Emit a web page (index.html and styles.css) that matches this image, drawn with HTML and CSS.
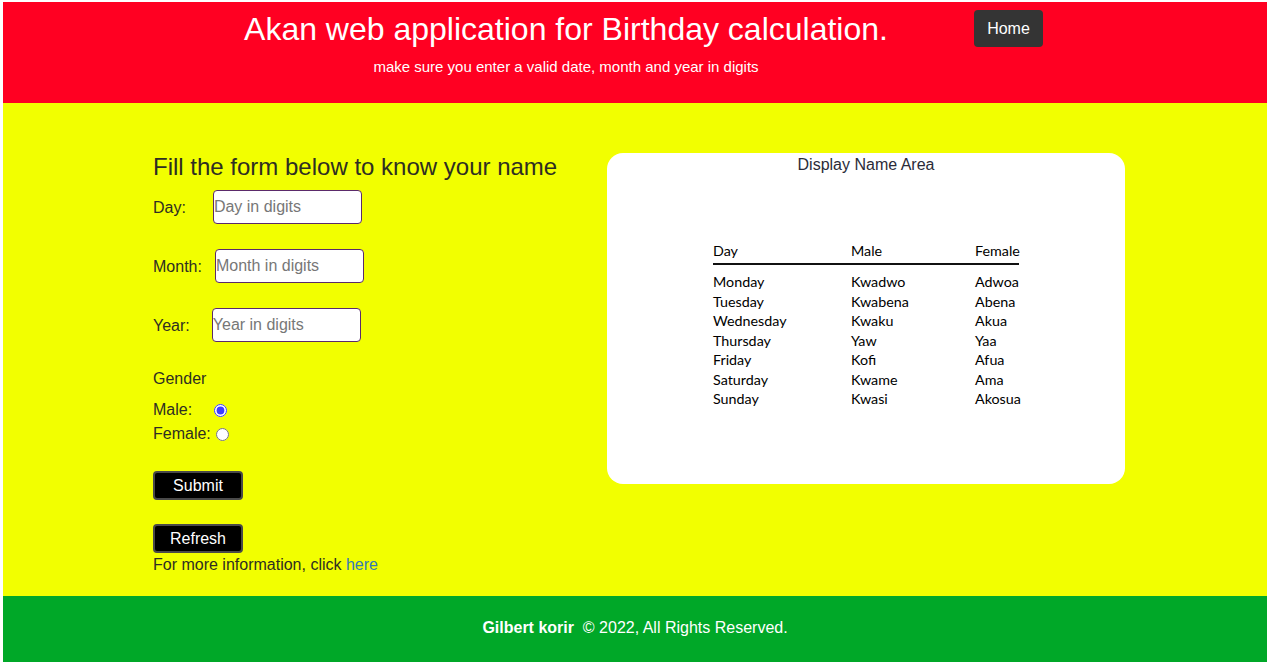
FILE: index.html
```html
<!DOCTYPE html>
<html lang="en">
<head>
<meta charset="utf-8">
<title>Akan Names</title>
<link rel="stylesheet" href="styles.css">
</head>
<body>
<div class="page">
  <header class="site-header">
    <div class="titles">
      <h1 class="title">Akan web application for Birthday calculation.</h1>
      <p class="subtitle">make sure you enter a valid date, month and year in digits</p>
    </div>
    <a class="home-btn" href="#">Home</a>
  </header>

  <main class="main">
    <section class="form-col">
      <h2 class="form-title">Fill the form below to know your name</h2>
      <form class="form">
        <div class="field">
          <label class="lbl">Day:</label>
          <input class="inp inp-day" type="text" placeholder="Day in digits">
        </div>
        <div class="field">
          <label class="lbl">Month:</label>
          <input class="inp inp-month" type="text" placeholder="Month in digits">
        </div>
        <div class="field">
          <label class="lbl">Year:</label>
          <input class="inp inp-year" type="text" placeholder="Year in digits">
        </div>
        <p class="gender">Gender</p>
        <div class="radio-row">
          <label class="lbl">Male:</label>
          <input class="radio radio-male" type="radio" name="g" checked>
        </div>
        <div class="radio-row">
          <label class="lbl">Female:</label>
          <input class="radio radio-female" type="radio" name="g">
        </div>
        <button class="btn btn-submit" type="button">Submit</button>
        <button class="btn btn-refresh" type="button">Refresh</button>
      </form>
      <p class="more">For more information, click <a class="link" href="#">here</a></p>
    </section>

    <section class="card">
      <p class="card-title">Display Name Area</p>
      <div class="names">
        <div class="names-head">
          <span>Day</span><span>Male</span><span>Female</span>
        </div>
        <div class="names-body">
          <span>Monday</span><span>Kwadwo</span><span>Adwoa</span>
          <span>Tuesday</span><span>Kwabena</span><span>Abena</span>
          <span>Wednesday</span><span>Kwaku</span><span>Akua</span>
          <span>Thursday</span><span>Yaw</span><span>Yaa</span>
          <span>Friday</span><span>Kofi</span><span>Afua</span>
          <span>Saturday</span><span>Kwame</span><span>Ama</span>
          <span>Sunday</span><span>Kwasi</span><span>Akosua</span>
        </div>
      </div>
    </section>
  </main>

  <footer class="footer">
    <strong class="author">Gilbert korir</strong>&nbsp; &copy; 2022, All Rights Reserved.
  </footer>
</div>
</body>
</html>
```
FILE: styles.css
```css
* { box-sizing: border-box; }

html, body {
  margin: 0;
  padding: 0;
  background: #ffffff;
}

body {
  padding: 2px 3px;
  font-family: "Liberation Sans", Arial, Helvetica, sans-serif;
  font-size: 16px;
  line-height: 1.15;
  color: #333333;
}

.page {
  display: flex;
  flex-direction: column;
  height: 660px;
}

/* Header */
.site-header {
  background: #ff0022;
  height: 101px;
  display: flex;
  align-items: flex-start;
  padding-left: 175px;
  flex: 0 0 auto;
}

.titles {
  width: 776px;
  text-align: center;
  color: #ffffff;
}

.title {
  margin: 8.6px 0 0;
  font-size: 32px;
  font-weight: 400;
  line-height: 36.8px;
}

.subtitle {
  margin: 11px 0 0;
  font-size: 15px;
  line-height: 17.25px;
}

.home-btn {
  margin: 8px 0 0 20px;
  display: block;
  width: 69px;
  height: 37px;
  line-height: 37px;
  text-align: center;
  background: #343434;
  color: #ffffff;
  border-radius: 4px;
  text-decoration: none;
  font-size: 16px;
}

/* Main */
.main {
  flex: 1 1 auto;
  background: #f2ff00;
  display: grid;
  grid-template-columns: 454px 518px;
  align-items: start;
  padding: 50px 0 0 150px;
}

.form-title {
  margin: 0;
  font-size: 24px;
  font-weight: 400;
  line-height: 27.6px;
  color: #2e2e22;
}

.form {
  display: flex;
  flex-direction: column;
  align-items: flex-start;
}

.field {
  display: flex;
  align-items: center;
  height: 34px;
  margin-top: 25px;
}

.field:first-child { margin-top: 9.4px; }

.field .lbl { position: relative; top: 1px; }

.lbl {
  color: #2e2e22;
}

.inp {
  width: 149px;
  height: 34px;
  margin: 0;
  padding: 0;
  border: 1px solid #5b2a6a;
  border-radius: 4px;
  background: #ffffff;
  font-family: "Liberation Sans", Arial, sans-serif;
  font-size: 16px;
  color: #333;
}

.inp::placeholder { color: #777777; }

.inp-day { margin-left: 27px; }
.inp-month { margin-left: 13px; }
.inp-year { margin-left: 22px; }

.gender {
  margin: 28px 0 0;
  line-height: 18.4px;
  color: #2e2e22;
}

.radio-row {
  display: flex;
  align-items: center;
  height: 24px;
}

.gender + .radio-row { margin-top: 10px; }

.radio {
  width: 13px;
  height: 13px;
  margin: 0;
  accent-color: #3b3bff;
}

.radio-male { margin-left: 22px; }
.radio-female { margin-left: 5px; }

.btn {
  width: 90px;
  height: 29px;
  padding: 0;
  background: #000000;
  color: #ffffff;
  border: 2px solid #4a4a4a;
  border-radius: 4px;
  font-family: "Liberation Sans", Arial, sans-serif;
  font-size: 16px;
}

.btn-submit { margin-top: 25px; }
.btn-refresh { margin-top: 24px; }

.more {
  margin: 3px 0 0;
  line-height: 18.4px;
  color: #2e2e22;
}

.link {
  color: #337ab7;
  text-decoration: none;
}

/* Card */
.card {
  background: #ffffff;
  border-radius: 16px;
  height: 331px;
  padding-top: 3px;
  display: flex;
  flex-direction: column;
  align-items: center;
}

.card-title {
  margin: 0;
  line-height: 18.4px;
  color: #2b2b38;
}

.names {
  margin-top: 67px;
  width: 306px;
  font-family: Lato, "Open Sans", sans-serif;
  font-size: 14.3px;
  line-height: 19.43px;
  color: #000000;
}

.names-head,
.names-body {
  display: grid;
  grid-template-columns: 138px 124px 1fr;
}

.names-head {
  padding-bottom: 2.2px;
  border-bottom: 2px solid #111111;
}

.names-body {
  margin-top: 7.4px;
}

/* Footer */
.footer {
  flex: 0 0 66px;
  background: #00a828;
  color: #ffffff;
  text-align: center;
  padding-top: 23px;
  line-height: 18.4px;
}

.author { font-weight: 700; }
```
